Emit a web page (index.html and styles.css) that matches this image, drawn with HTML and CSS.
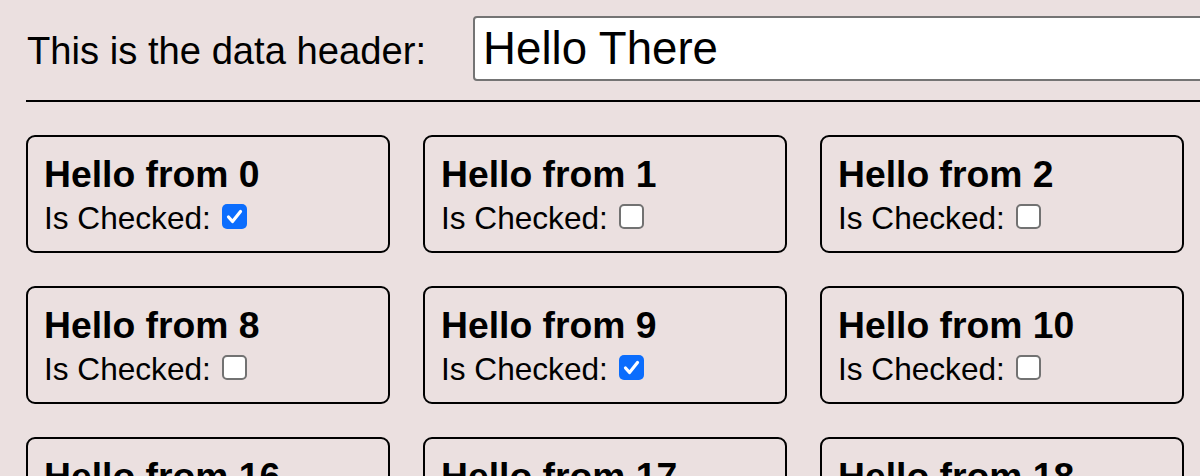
FILE: index.html
```html
<!DOCTYPE html>
<html lang="en">
<head>
<meta charset="utf-8">
<title>Data header</title>
<link rel="stylesheet" href="styles.css">
</head>
<body>
<main class="page">
  <div class="header">
    <label class="header-label" for="hdr">This is the data header:</label>
    <input class="header-input" id="hdr" type="text" value="Hello There">
  </div>
  <hr class="divider">
  <div class="grid">
    <div class="card"><div class="card-title">Hello from 0</div><div class="card-row">Is Checked: <span class="check is-on"><svg viewBox="0 0 25 25"><path d="M6.5 13 L10.5 17.5 L18.5 7.5" /></svg></span></div></div>
    <div class="card"><div class="card-title">Hello from 1</div><div class="card-row">Is Checked: <span class="check"></span></div></div>
    <div class="card"><div class="card-title">Hello from 2</div><div class="card-row">Is Checked: <span class="check"></span></div></div>
    <div class="card"><div class="card-title">Hello from 3</div><div class="card-row">Is Checked: <span class="check"></span></div></div>
    <div class="card"><div class="card-title">Hello from 4</div><div class="card-row">Is Checked: <span class="check"></span></div></div>
    <div class="card"><div class="card-title">Hello from 5</div><div class="card-row">Is Checked: <span class="check"></span></div></div>
    <div class="card"><div class="card-title">Hello from 6</div><div class="card-row">Is Checked: <span class="check"></span></div></div>
    <div class="card"><div class="card-title">Hello from 7</div><div class="card-row">Is Checked: <span class="check"></span></div></div>
    <div class="card"><div class="card-title">Hello from 8</div><div class="card-row">Is Checked: <span class="check"></span></div></div>
    <div class="card"><div class="card-title">Hello from 9</div><div class="card-row">Is Checked: <span class="check is-on"><svg viewBox="0 0 25 25"><path d="M6.5 13 L10.5 17.5 L18.5 7.5" /></svg></span></div></div>
    <div class="card"><div class="card-title">Hello from 10</div><div class="card-row">Is Checked: <span class="check"></span></div></div>
    <div class="card"><div class="card-title">Hello from 11</div><div class="card-row">Is Checked: <span class="check"></span></div></div>
    <div class="card"><div class="card-title">Hello from 12</div><div class="card-row">Is Checked: <span class="check"></span></div></div>
    <div class="card"><div class="card-title">Hello from 13</div><div class="card-row">Is Checked: <span class="check"></span></div></div>
    <div class="card"><div class="card-title">Hello from 14</div><div class="card-row">Is Checked: <span class="check"></span></div></div>
    <div class="card"><div class="card-title">Hello from 15</div><div class="card-row">Is Checked: <span class="check"></span></div></div>
    <div class="card"><div class="card-title">Hello from 16</div><div class="card-row">Is Checked: <span class="check"></span></div></div>
    <div class="card"><div class="card-title">Hello from 17</div><div class="card-row">Is Checked: <span class="check"></span></div></div>
    <div class="card"><div class="card-title">Hello from 18</div><div class="card-row">Is Checked: <span class="check is-on"><svg viewBox="0 0 25 25"><path d="M6.5 13 L10.5 17.5 L18.5 7.5" /></svg></span></div></div>
    <div class="card"><div class="card-title">Hello from 19</div><div class="card-row">Is Checked: <span class="check"></span></div></div>
    <div class="card"><div class="card-title">Hello from 20</div><div class="card-row">Is Checked: <span class="check"></span></div></div>
    <div class="card"><div class="card-title">Hello from 21</div><div class="card-row">Is Checked: <span class="check"></span></div></div>
    <div class="card"><div class="card-title">Hello from 22</div><div class="card-row">Is Checked: <span class="check"></span></div></div>
    <div class="card"><div class="card-title">Hello from 23</div><div class="card-row">Is Checked: <span class="check"></span></div></div>
  </div>
</main>
</body>
</html>
```

FILE: styles.css
```css
html, body {
  margin: 0;
  padding: 0;
  overflow: hidden;
  background: #ebe0e0;
  color: #000;
  font-family: "Liberation Sans", Arial, Helvetica, sans-serif;
}

.page {
  padding: 16px 0 0 26px;
}

.header {
  display: flex;
  align-items: baseline;
  gap: 47px;
}

.header-label {
  flex: none;
  font-size: 38.2px;
  padding-left: 1px;
}

.header-input {
  flex: none;
  box-sizing: border-box;
  width: 900px;
  height: 65px;
  margin: 0;
  padding: 0 8px;
  border: 2px solid #747474;
  border-radius: 4px;
  background: #fff;
  color: #000;
  font-family: "Liberation Sans", Arial, Helvetica, sans-serif;
  font-size: 45.6px;
  outline: none;
}

.divider {
  border: 0;
  height: 2px;
  background: #000;
  margin: 19px 0 33px 0;
}

.grid {
  display: grid;
  grid-template-columns: repeat(8, 364px);
  grid-auto-rows: 118px;
  column-gap: 33px;
  row-gap: 33px;
}

.card {
  box-sizing: border-box;
  border: 2px solid #000;
  border-radius: 9px;
  padding: 16px 16px;
}

.card-title {
  font-size: 37.3px;
  font-weight: bold;
  margin-bottom: 4px;
}

.card-row {
  font-size: 31.6px;
}

.check {
  display: inline-block;
  box-sizing: border-box;
  width: 25px;
  height: 25px;
  margin-left: 2px;
  vertical-align: baseline;
  background: #fff;
  border: 2px solid #727272;
  border-radius: 5px;
}

.check.is-on {
  background: #0b6dfd;
  border: 0;
}

.check svg {
  display: block;
  width: 25px;
  height: 25px;
}

.check svg path {
  fill: none;
  stroke: #fff;
  stroke-width: 3.2;
  stroke-linecap: round;
  stroke-linejoin: round;
}
```
